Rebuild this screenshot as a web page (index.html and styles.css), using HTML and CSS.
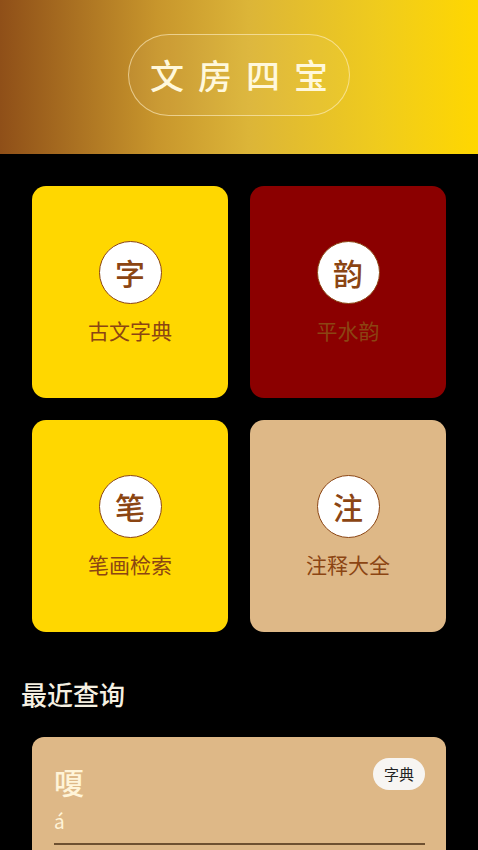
FILE: index.html
```html
<!DOCTYPE html>
<html lang="zh">
<head>
<meta charset="utf-8">
<title>文房四宝</title>
<link rel="stylesheet" href="styles.css">
</head>
<body>
<header class="hero">
  <div class="hero-pill">文房四宝</div>
</header>
<main class="content">
  <section class="tiles">
    <a class="tile tile-yellow"><span class="tile-icon">字</span><span class="tile-label">古文字典</span></a>
    <a class="tile tile-red"><span class="tile-icon">韵</span><span class="tile-label">平水韵</span></a>
    <a class="tile tile-yellow"><span class="tile-icon">笔</span><span class="tile-label">笔画检索</span></a>
    <a class="tile tile-tan"><span class="tile-icon">注</span><span class="tile-label">注释大全</span></a>
  </section>
  <h2 class="section-title">最近查询</h2>
  <section class="recent-card">
    <div class="entry">
      <div class="entry-main">
        <div class="entry-word">嗄</div>
        <div class="entry-pinyin">á</div>
      </div>
      <span class="entry-badge">字典</span>
    </div>
  </section>
</main>
</body>
</html>
```
FILE: styles.css
```css
* { box-sizing: border-box; }
html, body { margin: 0; padding: 0; }
body {
  background: #000;
  font-family: "Noto Sans CJK SC", "Noto Sans", sans-serif;
  width: 478px;
  min-height: 850px;
}
.hero {
  height: 154px;
  background: linear-gradient(90deg, #8f4f18 0%, #c8962c 33%, #dcb538 52%, #f0cc1c 80%, #ffd700 100%);
  display: flex;
  align-items: center;
  justify-content: center;
  padding-bottom: 4px;
}
.hero-pill {
  width: 222px;
  height: 82px;
  border: 1px solid rgba(255, 240, 200, 0.6);
  border-radius: 41px;
  background: rgba(255, 255, 255, 0.04);
  color: #fff8dc;
  font-size: 34px;
  font-weight: 500;
  letter-spacing: 14px;
  line-height: 80px;
  padding-left: 21px;
  white-space: nowrap;
}
.content { padding: 32px 0 0; }
.tiles {
  margin: 0 32px;
  display: grid;
  grid-template-columns: 196px 196px;
  grid-auto-rows: 212px;
  gap: 22px;
}
.tile {
  border-radius: 14px;
  display: flex;
  flex-direction: column;
  align-items: center;
  justify-content: center;
  gap: 12px;
  text-decoration: none;
}
.tile-yellow { background: #ffd700; }
.tile-red { background: #8b0000; }
.tile-tan { background: #deb887; }
.tile-icon {
  width: 63px;
  height: 63px;
  border-radius: 50%;
  background: #fff;
  border: 1.5px solid #8b4513;
  color: #8b4513;
  font-size: 30px;
  font-weight: 500;
  line-height: 60px;
  text-align: center;
}
.tile-label {
  color: #8b4513;
  font-size: 21px;
  line-height: 28px;
}
.section-title {
  margin: 44px 0 0 21px;
  color: #f5f0e2;
  font-size: 26px;
  font-weight: 500;
  line-height: 36px;
}
.recent-card {
  margin: 25px 32px 0;
  background: #deb887;
  border-radius: 12px;
  padding: 21px 21px 40px 22px;
}
.entry {
  display: flex;
  justify-content: space-between;
  align-items: flex-start;
  border-bottom: 2px solid #6e5030;
  padding-bottom: 9px;
}
.entry-word {
  color: #fff4d8;
  font-size: 30px;
  font-weight: 500;
  line-height: 40px;
  margin-top: 3px;
}
.entry-pinyin {
  color: #fff4d8;
  font-size: 19px;
  line-height: 26px;
  margin-top: 7px;
}
.entry-badge {
  background: #f7f5f2;
  color: #222;
  font-size: 15px;
  height: 32px;
  line-height: 32px;
  padding: 0 11px;
  border-radius: 16px;
}
```
